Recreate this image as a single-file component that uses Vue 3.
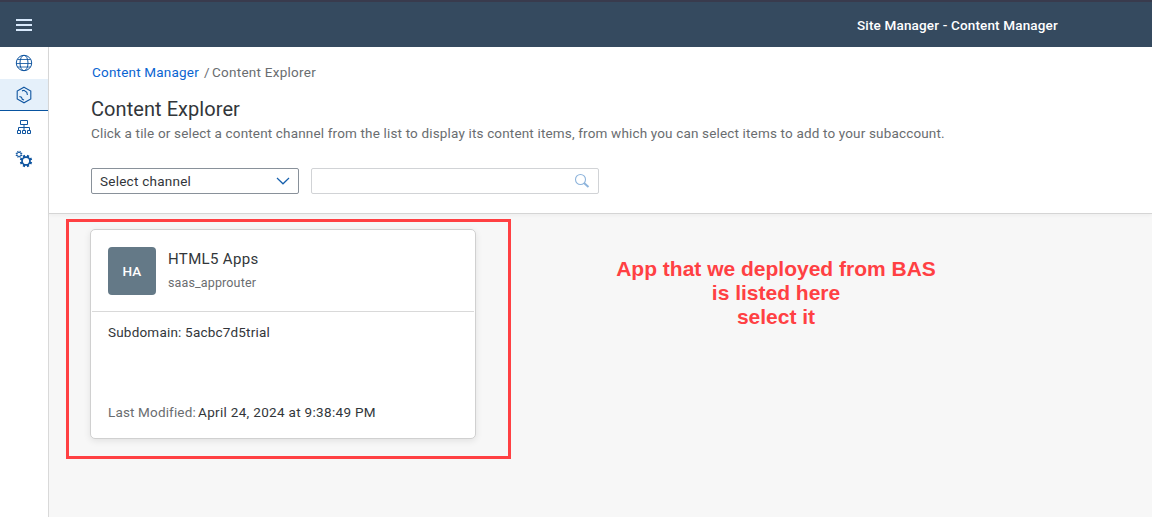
<script setup>
const notes = ['App that we deployed from BAS', 'is listed here', 'select it']
const gear = (cx, cy, outer, inner, teeth) => {
  const step = (Math.PI * 2) / teeth
  const points = []
  for (let i = 0; i < teeth; i++) {
    for (const [offset, r] of [[-0.3, inner], [-0.24, outer], [0.24, outer], [0.3, inner]]) {
      const a = (i + offset) * step + step / 2
      points.push(`${(cx + r * Math.cos(a)).toFixed(2)},${(cy + r * Math.sin(a)).toFixed(2)}`)
    }
  }
  return points.join(' ')
}
const smallGear = gear(4, 4.3, 3.5, 2.4, 8)
const largeGear = gear(11, 11, 6.3, 4.8, 8)
</script>

<template>
  <div class="shell">
    <header class="bar">
      <svg class="menu" width="18" height="14" viewBox="0 0 18 14">
        <path d="M1 2h16M1 7h16M1 12h16" stroke="#d8e9fc" stroke-width="2" />
      </svg>
      <span class="app-title">Site Manager - Content Manager</span>
    </header>
    <div class="body">
      <nav class="side">
        <div class="nav-item">
          <svg width="18" height="18" viewBox="0 0 18 18" fill="none" stroke="#0f55a0">
            <circle cx="9" cy="9" r="7.7" />
            <ellipse cx="9" cy="9" rx="4" ry="7.7" />
            <path d="M2.5 5.5h13M1.3 9.5h15.4M2.5 13h13" stroke-width=".85" />
          </svg>
        </div>
        <div class="nav-item active">
          <svg width="18" height="18" viewBox="0 0 18 18" fill="none" stroke="#0f55a0" stroke-width="1.1">
            <path d="M9 1.2 15.8 5v8L9 16.8 2.2 13V5zM7 4.9l2-.6 2.800 2 .6 2.700M4.400 10.500l2 .6.9 2.200 1.700.8" />
          </svg>
        </div>
        <div class="nav-item">
          <svg width="18" height="18" viewBox="0 0 18 18" fill="none" stroke="#0f55a0">
            <path d="M5.5 2.500h7v4h-7zM9 6.500v3M3.500 12.500v-3h11v3M9 9.500v3M2.500 12.500h3v3h-3zM7.500 12.500h3v3h-3zM12.500 12.500h3v3h-3z" />
          </svg>
        </div>
        <div class="nav-item">
          <svg width="18" height="18" viewBox="0 0 18 18" fill="#0f55a0">
            <polygon :points="smallGear" />
            <circle cx="4" cy="4.300" r="1.600" fill="#fff" />
            <polygon :points="largeGear" />
            <circle cx="11" cy="11" r="3.100" fill="#fff" />
          </svg>
        </div>
      </nav>
      <main class="main">
        <section class="top">
          <div class="crumbs"><a>Content Manager</a><i>/</i><span>Content Explorer</span></div>
          <h1>Content Explorer</h1>
          <p class="desc">Click a tile or select a content channel from the list to display its content items, from which you can select items to add to your subaccount.</p>
          <div class="filters">
            <div class="select">
              <span>Select channel</span>
              <svg width="14" height="8" viewBox="0 0 14 8" fill="none" stroke="#1660ad" stroke-width="1.200"><path d="m1 1 6 5.800L13 1" /></svg>
            </div>
            <div class="search">
              <svg width="16" height="16" viewBox="0 0 16 16" fill="none" stroke="#8eb4dc">
                <circle cx="6.500" cy="6.500" r="5" stroke-width="1.100" /><path d="m10 10 4.500 4" stroke-width="2" />
              </svg>
            </div>
          </div>
        </section>
        <section class="content">
          <article class="card">
            <div class="card-head">
              <div class="avatar">HA</div>
              <div>
                <div class="name">HTML5 Apps</div>
                <div class="sub">saas_approuter</div>
              </div>
            </div>
            <div class="card-body">
              <div class="domain">Subdomain: 5acbc7d5trial</div>
              <div class="modified"><span class="label">Last Modified:</span><span class="date">April 24, 2024 at 9:38:49 PM</span></div>
            </div>
          </article>
          <div class="frame"></div>
          <div class="note"><div v-for="line in notes" :key="line">{{ line }}</div></div>
        </section>
      </main>
    </div>
  </div>
</template>

<style>
body { margin: 0; overflow: hidden; }
</style>

<style scoped>
* { box-sizing: border-box; }
.shell { height: 517px; width: 1152px; display: flex; flex-direction: column; background: #fff; color: #32363a; font: 13.5px/20px Roboto, "Liberation Sans", sans-serif; letter-spacing: .2px; white-space: nowrap; }
.bar { height: 47px; flex: none; display: flex; align-items: center; justify-content: space-between; padding: 1px 94px 0 15px; border-top: 2px solid #393b4d; background: #354a5f; }
.menu { display: block; }
.app-title { color: #fff; font-weight: 500; width: 201px; letter-spacing: .16px; }
.body { flex: 1; display: flex; min-height: 0; }
.side { width: 49px; border-right: 1px solid #d9d9d9; }
.nav-item { height: 32px; display: flex; align-items: center; justify-content: center; }
.nav-item svg { display: block; }
.nav-item.active { background: #e5f0fa; border-bottom: 1px solid #0854a0; }
.main { flex: 1; display: flex; flex-direction: column; }
.top { height: 167px; flex: none; padding: 15px 42px 0; border-bottom: 1px solid #d5d5d5; position: relative; z-index: 1; box-shadow: 0 2px 3px rgba(0, 0, 0, .03); }
.crumbs { display: flex; color: #6a6d70; padding-left: 1px; }
.crumbs a { color: #0a64d1; width: 112px; letter-spacing: .2px; }
.crumbs i { font-style: normal; width: 8px; }
.crumbs span { letter-spacing: .26px; }
h1 { margin: 15px 0 0; font-size: 20px; line-height: 24px; font-weight: 400; letter-spacing: .06px; }
.desc { margin: 2px 0 0; color: #6a6d70; letter-spacing: .162px; }
.filters { display: flex; gap: 12px; margin-top: 25px; }
.select { width: 208px; height: 26px; border: 1px solid #89919a; border-radius: 2px; display: flex; align-items: center; justify-content: space-between; padding: 0 8px; letter-spacing: .25px; }
.search { width: 288px; height: 26px; border: 1px solid #d1d3d6; border-radius: 2px; display: flex; align-items: center; justify-content: flex-end; padding-right: 8px; }
.content { flex: 1; position: relative; background: #f7f7f7; padding: 15px 0 0 41px; display: flex; align-items: flex-start; }
.card { width: 386px; height: 210px; background: #fff; border: 1px solid #d0d0d0; border-radius: 5px; box-shadow: 0 2px 7px rgba(0, 0, 0, .09); }
.card-head { height: 82px; margin: 0 1px; border-bottom: 1px solid #d9d9d9; padding: 17px 16px; display: flex; gap: 12px; }
.avatar { width: 48px; height: 48px; border-radius: 4px; background: #647987; color: #fff; display: flex; align-items: center; justify-content: center; font-weight: 500; }
.name { font-size: 15px; line-height: 24px; letter-spacing: .35px; }
.sub { color: #6a6d70; font-size: 12.5px; line-height: 24px; letter-spacing: .14px; }
.card-body { padding: 10px 17px; }
.modified { display: flex; margin-top: 60px; }
.label { color: #6a6d70; width: 90px; letter-spacing: .15px; }
.date { letter-spacing: .32px; }
.frame { position: absolute; left: 17px; top: 5px; width: 445px; height: 240px; border: 3px solid #ff4043; }
.note { margin: 28px 0 0 140px; width: 320px; text-align: center; color: #ff4043; letter-spacing: 0; font: bold 21px/24px "Liberation Sans", Arial, sans-serif; }
</style>
